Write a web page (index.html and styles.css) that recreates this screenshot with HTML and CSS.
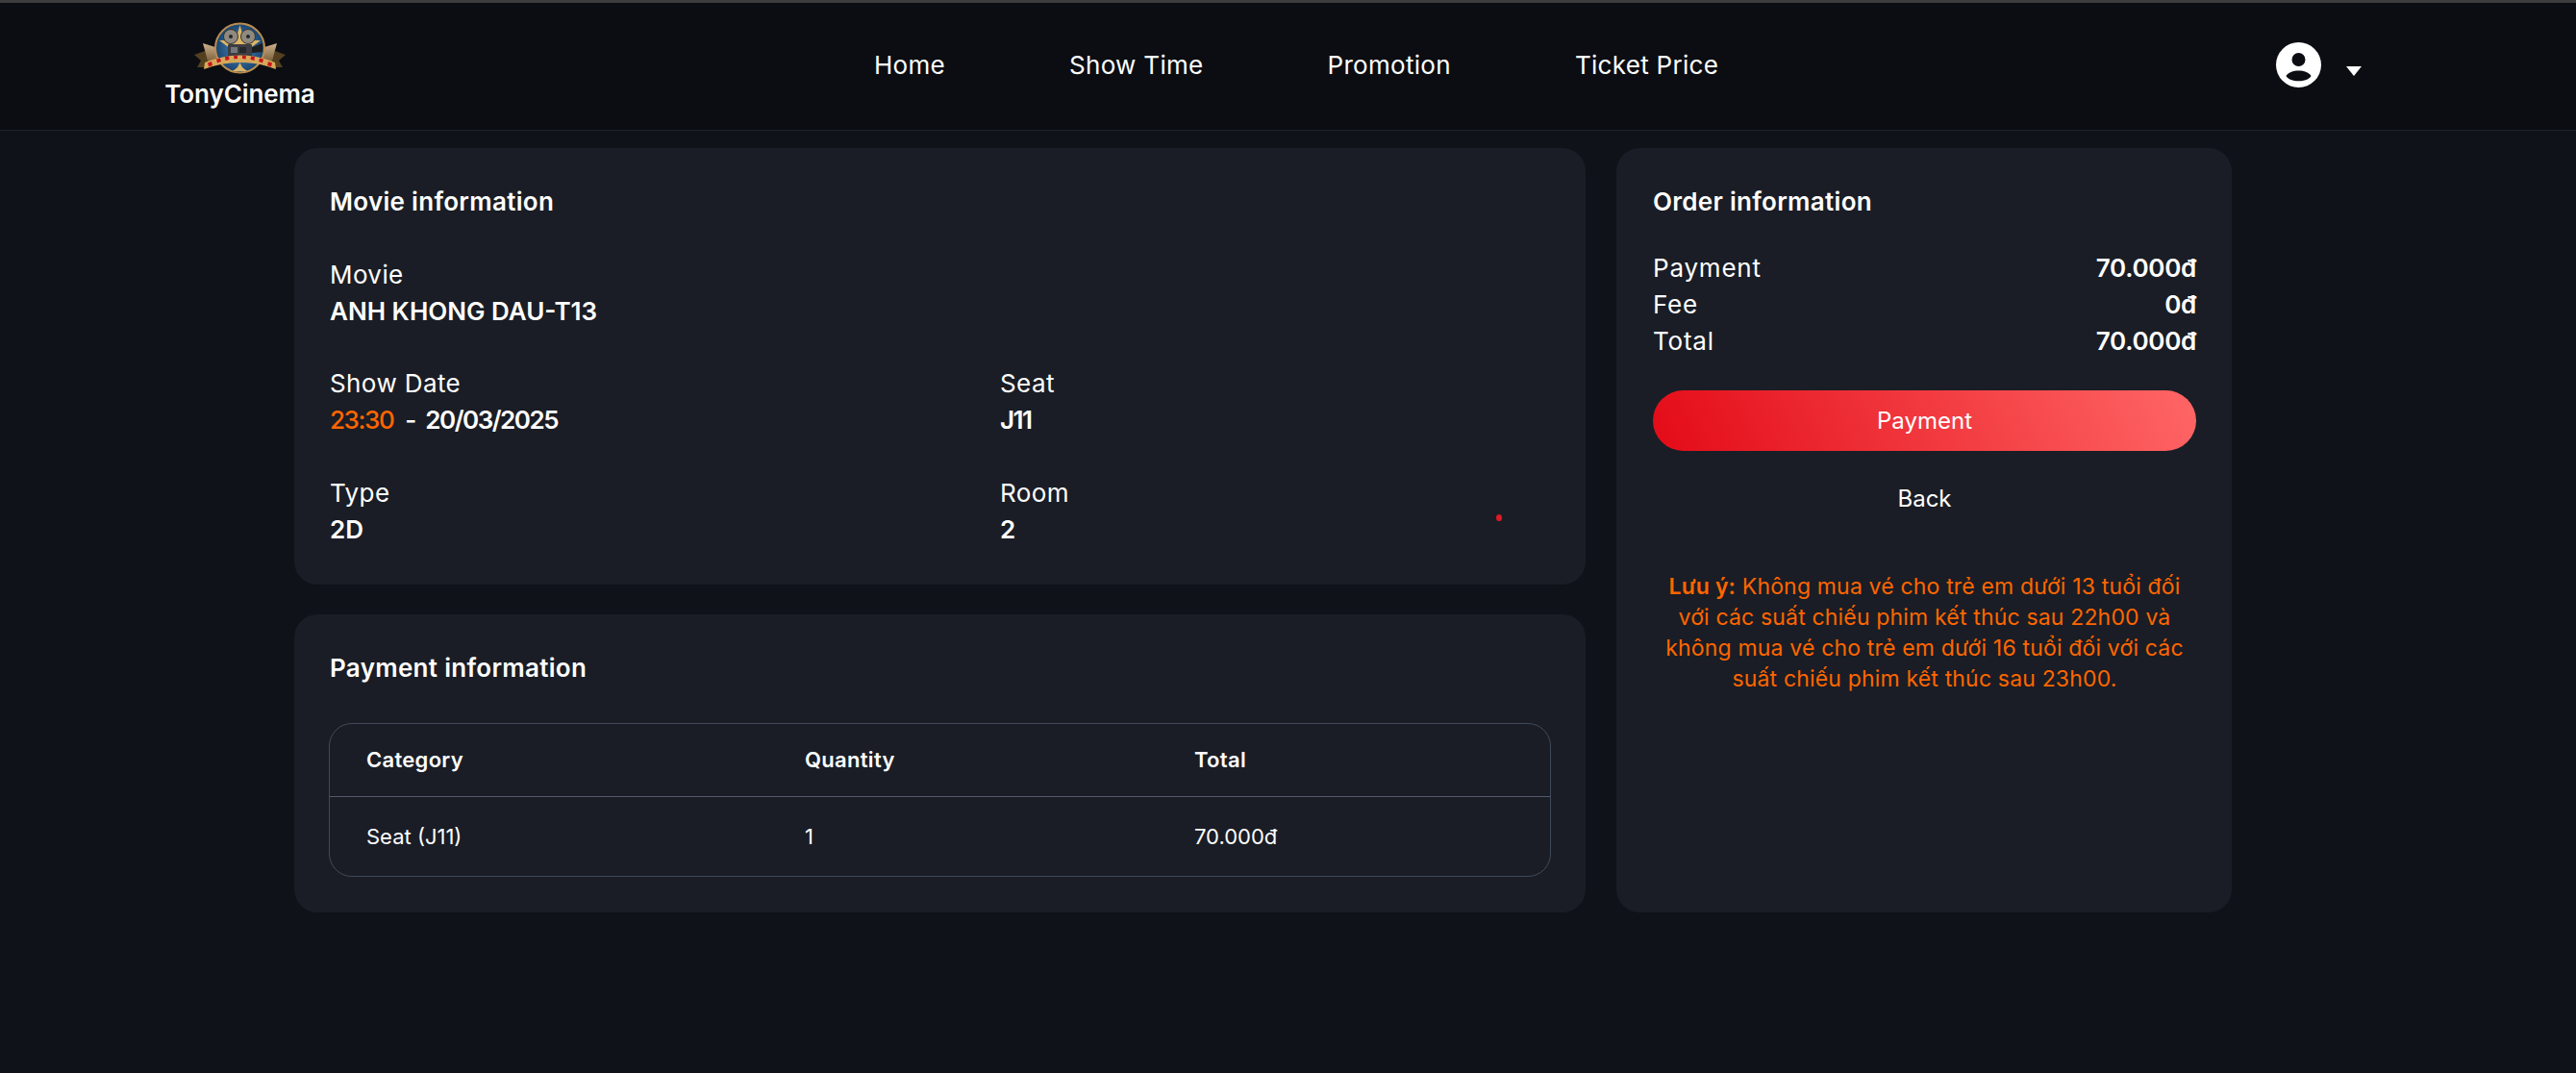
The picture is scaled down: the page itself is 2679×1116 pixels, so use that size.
FILE: index.html
```html
<!DOCTYPE html>
<html lang="en">
<head>
    <meta charset="UTF-8">
    <meta name="viewport" content="width=device-width, initial-scale=1.0">
    <title>TonyCinema - Payment</title>
    <link rel="stylesheet" href="styles.css">
</head>
<body>

    <header class="header">
        <a class="brand" href="#">
            <svg class="brand-logo" viewBox="0 0 96 54" aria-hidden="true">
                <defs>
                    <linearGradient id="tail" x1="0" y1="0" x2="0" y2="1">
                        <stop offset="0" stop-color="#cdb08a"/>
                        <stop offset="1" stop-color="#6e5330"/>
                    </linearGradient>
                    <radialGradient id="disc" cx="0.5" cy="0.5" r="0.55">
                        <stop offset="0" stop-color="#4b8cc0"/>
                        <stop offset="1" stop-color="#153c66"/>
                    </radialGradient>
                </defs>
                <!-- ribbon tails -->
                <path d="M0 34 L11 30 L17 41 L15 47 L3 47 L7 40 Z" fill="#54401f"/>
                <path d="M95 34 L84 30 L78 41 L80 47 L92 47 L88 40 Z" fill="#54401f"/>
                <path d="M9 22 L22 26 L24 39 L15 44 Z" fill="url(#tail)"/>
                <path d="M86 22 L73 26 L71 39 L80 44 Z" fill="url(#tail)"/>
                <!-- medal -->
                <circle cx="47.500" cy="27" r="25.500" fill="url(#disc)" stroke="#b98d50" stroke-width="2"/>
                <path d="M47.500 3 L52 19 L69 19 L57 28 L38 28 L26 19 L43 19 Z" fill="#dcb566"/>
                <circle cx="38" cy="15" r="7.500" fill="#8f8a80" stroke="#35352f"/>
                <circle cx="56" cy="15" r="7.500" fill="#8f8a80" stroke="#35352f"/>
                <circle cx="38" cy="15" r="2" fill="#26262a"/>
                <circle cx="56" cy="15" r="2" fill="#26262a"/>
                <!-- camera -->
                <rect x="35" y="23" width="25" height="14" rx="1" fill="#3b3d42"/>
                <rect x="38" y="26" width="7" height="6" fill="#74777c"/>
                <rect x="47" y="26" width="7" height="6" fill="#26272b"/>
                <path d="M60 26 L71 22 L71 31 L60 32 Z" fill="#1c1d20"/>
                <!-- banner -->
                <path d="M11 42 Q47.500 27 84 42 L85 49 Q47.500 35 10 49 Z" fill="#d6a85a"/>
                <path d="M14 42.500 L18 41 L19 45 L15 46.500 Z M23 38.500 L27 37.500 L28 41 L24 42.500 Z M32 36 L36 35.500 L36.500 39 L32.500 40 Z M41 35 L45 34.500 L45 38 L41.500 38.500 Z M50 34.500 L54 35 L53.500 38.500 L50 38 Z M59 35.500 L63 36 L62.500 40 L58.500 39 Z M68 37.500 L72 38.500 L71 42.500 L67 41 Z M77 41 L81 42.500 L80 46.500 L76 45 Z" fill="#c8141c"/>
                <path d="M47.500 42 L50 47 L55 51 L40 51 L45 47 Z" fill="#dcb566"/>
            </svg>
            <span class="brand-name">TonyCinema</span>
        </a>

        <nav class="nav">
            <a href="#">Home</a>
            <a href="#">Show Time</a>
            <a href="#">Promotion</a>
            <a href="#">Ticket Price</a>
        </nav>

        <div class="user">
            <svg class="user-icon" viewBox="0 0 47 47" aria-hidden="true">
                <circle cx="23.500" cy="23.500" r="23.500" fill="#fff"/>
                <circle cx="23.500" cy="18" r="7" fill="#0b0d12"/>
                <path d="M10.500 35 C14 27.500 33 27.500 36.500 35 C33 42 14 42 10.500 35 Z" fill="#0b0d12"/>
            </svg>
            <span class="caret"></span>
        </div>
    </header>

    <main class="page">
        <div class="left-col">
            <section class="card movie-card">
                <h2 class="card-title">Movie information</h2>
                <div class="field">
                    <span class="label">Movie</span>
                    <strong class="value">ANH KHONG DAU-T13</strong>
                </div>
                <div class="field-grid">
                    <div class="field">
                        <span class="label">Show Date</span>
                        <strong class="value"><span class="time">23:30</span><span class="dash">-</span><span class="tight">20/03/2025</span></strong>
                    </div>
                    <div class="field">
                        <span class="label">Seat</span>
                        <strong class="value tight">J11</strong>
                    </div>
                    <div class="field">
                        <span class="label">Type</span>
                        <strong class="value">2D</strong>
                    </div>
                    <div class="field">
                        <span class="label">Room</span>
                        <strong class="value">2</strong>
                    </div>
                </div>
                <span class="red-dot"></span>
            </section>

            <section class="card">
                <h2 class="card-title">Payment information</h2>
                <div class="table-wrap">
                    <table class="pay-table">
                        <thead>
                            <tr>
                                <th class="col-category">Category</th>
                                <th class="col-quantity">Quantity</th>
                                <th>Total</th>
                            </tr>
                        </thead>
                        <tbody>
                            <tr>
                                <td>Seat (J11)</td>
                                <td>1</td>
                                <td>70.000đ</td>
                            </tr>
                        </tbody>
                    </table>
                </div>
            </section>
        </div>

        <aside class="card order-card">
            <h2 class="card-title">Order information</h2>
            <div class="order-rows">
                <div class="order-row"><span>Payment</span><strong>70.000đ</strong></div>
                <div class="order-row"><span>Fee</span><strong>0đ</strong></div>
                <div class="order-row"><span>Total</span><strong>70.000đ</strong></div>
            </div>
            <button class="pay-btn" type="button">Payment</button>
            <a class="back-link" href="#">Back</a>
            <p class="note"><strong>Lưu ý:</strong> Không mua vé cho trẻ em dưới 13 tuổi đối với các suất chiếu phim kết thúc sau 22h00 và không mua vé cho trẻ em dưới 16 tuổi đối với các suất chiếu phim kết thúc sau 23h00.</p>
        </aside>
    </main>

</body>
</html>
```

FILE: styles.css
```css
* {
    box-sizing: border-box;
}
body {
    margin: 0;
    min-height: 100vh;
    background-color: #0f1219;
    color: #fff;
    font-family: Inter, "Noto Sans", sans-serif;
}
a {
    color: inherit;
    text-decoration: none;
}

/* header */
.header {
    display: flex;
    align-items: flex-start;
    height: 136px;
    padding: 0 223px 0 171px;
    background-color: #0b0d12;
    border-top: 3px solid #3d3d3d;
    border-bottom: 1px solid #1d232e;
}
.brand {
    display: flex;
    flex-direction: column;
    align-items: center;
    width: 157px;
    padding-top: 20px;
}
.brand-logo {
    width: 96px;
    height: 54px;
}
.brand-name {
    font-size: 26px;
    font-weight: 600;
    line-height: 42px;
    letter-spacing: -0.1px;
}
.nav {
    display: flex;
    gap: 129px;
    margin-left: 581px;
    padding-top: 46px;
    font-size: 26px;
    line-height: 38px;
    letter-spacing: 0.3px;
}
.user {
    display: flex;
    align-items: center;
    gap: 26px;
    margin-left: auto;
    padding-top: 41px;
}
.user-icon {
    width: 47px;
    height: 47px;
}
.caret {
    width: 0;
    height: 0;
    margin-top: 13px;
    border-left: 8px solid transparent;
    border-right: 8px solid transparent;
    border-top: 10px solid #fff;
}

/* layout */
.page {
    display: grid;
    grid-template-columns: 1343px 640px;
    gap: 32px;
    padding: 18px 0 0 306px;
}
.left-col {
    display: flex;
    flex-direction: column;
    gap: 31px;
}
.card {
    position: relative;
    padding: 36px 36px 37px;
    background-color: #1a1d25;
    border-radius: 24px;
}
.movie-card {
    padding-bottom: 38px;
}
.card-title {
    margin: 0 0 37px 1px;
    font-size: 26px;
    font-weight: 600;
    line-height: 40px;
    letter-spacing: 0.3px;
}

/* movie info */
.field {
    display: flex;
    flex-direction: column;
    margin-left: 1px;
    font-size: 26px;
    line-height: 38px;
}
.label {
    letter-spacing: 0.4px;
}
.value {
    font-weight: 600;
    letter-spacing: 0;
}
.time {
    color: #ff6600;
    font-weight: 500;
    letter-spacing: -1.4px;
}
.dash {
    margin: 0 9px 0 12px;
    font-weight: 500;
}
.tight {
    letter-spacing: -1.5px;
}
.field-grid {
    display: grid;
    grid-template-columns: 697px 1fr;
    row-gap: 38px;
    margin-top: 37px;
}
.red-dot {
    position: absolute;
    top: 381px;
    right: 87px;
    width: 6px;
    height: 7px;
    background-color: #e01a22;
    border-radius: 50%;
}

/* payment table */
.table-wrap {
    border: 1px solid #414959;
    border-radius: 24px;
}
.pay-table {
    width: 100%;
    border-collapse: collapse;
    font-size: 22px;
}
.pay-table th,
.pay-table td {
    padding: 0 0 0 38px;
    text-align: left;
}
.pay-table th {
    height: 75px;
    font-weight: 600;
    letter-spacing: 0.3px;
    border-bottom: 1px solid #525a6b;
}
.pay-table td {
    height: 83px;
    font-weight: 400;
}
.col-category {
    width: 456px;
}
.col-quantity {
    width: 405px;
}

/* order info */
.order-card {
    padding: 36px 37px 37px 38px;
}
.order-card .card-title {
    margin: 0 0 30px;
}
.order-row {
    display: flex;
    justify-content: space-between;
    font-size: 26px;
    line-height: 38px;
}
.order-row span {
    letter-spacing: 0.8px;
}
.order-row strong {
    font-weight: 600;
    letter-spacing: -0.3px;
}
.pay-btn {
    display: block;
    width: 100%;
    height: 63px;
    margin-top: 32px;
    background: linear-gradient(65deg, #e30b17, #ff6666);
    border: none;
    border-radius: 32px;
    color: #fff;
    font-family: inherit;
    font-size: 24px;
    cursor: pointer;
}
.back-link {
    display: block;
    margin-top: 31px;
    font-size: 24px;
    line-height: 38px;
    text-align: center;
}
.note {
    max-width: 560px;
    margin: 56px auto 0;
    color: #ff6600;
    font-size: 23px;
    line-height: 32px;
    letter-spacing: 0.17px;
    text-align: center;
}
.note strong {
    font-weight: 600;
}
```
